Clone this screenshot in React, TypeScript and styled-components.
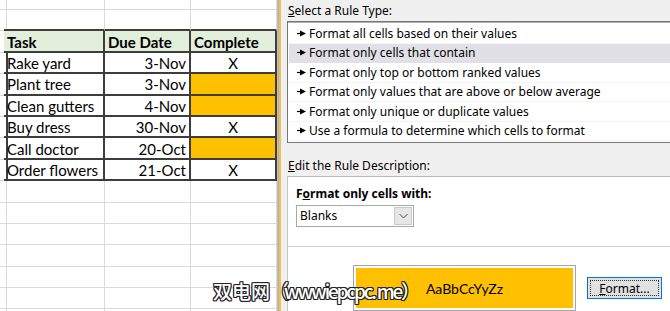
import React from 'react';
import styled, { createGlobalStyle } from 'styled-components';

const Global = createGlobalStyle`
  html, body { margin: 0; padding: 0; background: #fff; overflow: hidden; }
  #root { width: 670px; height: 311px; }
`;

const UI_FONT = `"Noto Sans", "Open Sans", sans-serif`;
const CELL_FONT = `Lato, "Liberation Sans", sans-serif`;
const DARK = '#3d3d3d';
const GRID = '#dadada';

const Page = styled.div`
  position: relative;
  display: flex;
  width: 670px;
  height: 311px;
  overflow: hidden;
  background: #fff;
`;

const Sheet = styled.div`
  flex: none;
  width: 277px;
  display: flex;
  flex-direction: column;
  margin-top: -11.4px;
`;

const Row = styled.div`
  flex: none;
  display: grid;
  grid-template-columns: 4px 101px 86px 86px;
  height: 21.4px;
`;

const Cell = styled.div<{ $r?: boolean; $b?: boolean; $fill?: string; $align?: 'left' | 'right' | 'center'; $bold?: boolean }>`
  box-sizing: border-box;
  min-width: 0;
  border-right: ${(p) => (p.$r ? `2px solid ${DARK}` : `1px solid ${GRID}`)};
  border-bottom: ${(p) => (p.$b ? `2px solid ${DARK}` : `1px solid ${GRID}`)};
  background: ${(p) => p.$fill || 'transparent'};
  display: flex;
  align-items: center;
  justify-content: ${(p) => (p.$align === 'right' ? 'flex-end' : p.$align === 'center' ? 'center' : 'flex-start')};
  padding: 1px 3px 0 3px;
  font-family: ${CELL_FONT};
  font-size: 15px;
  font-weight: ${(p) => (p.$bold ? 700 : 400)};
  color: #000;
  white-space: nowrap;
  overflow: hidden;
`;

const Shade = styled.div`
  flex: none;
  width: 2px;
  background: linear-gradient(to right, #c9c9c9, #a9a9a9);
`;

const Dialog = styled.div`
  flex: none;
  width: 420px;
  box-sizing: border-box;
  background: #f0f0f0;
  border-left: 2px solid #f0c048;
  padding: 3px 0 0 6px;
  display: flex;
  flex-direction: column;
  font-family: ${UI_FONT};
  font-size: 12px;
  color: #000;
`;

const Label = styled.div<{ $top?: number }>`
  height: 15px;
  line-height: 15px;
  padding-left: 1px;
  margin-top: ${(p) => p.$top ?? 0}px;
  white-space: nowrap;
`;

const RuleList = styled.div`
  margin-top: 3px;
  background: #fff;
  border: 1px solid #777;
  box-shadow: inset 0 1px 0 #b0b0b0;
  padding: 2px 0 1px 1px;
  display: flex;
  flex-direction: column;
`;

const RuleItem = styled.div<{ $selected?: boolean }>`
  height: 19.5px;
  box-sizing: border-box;
  display: flex;
  align-items: center;
  gap: 3px;
  padding-left: 8px;
  background: ${(p) => (p.$selected ? '#e0e0e6' : '#fff')};
  border-bottom: 1px solid ${(p) => (p.$selected ? '#e0e0e6' : '#f4f4f4')};
  white-space: nowrap;
`;

const DescBox = styled.div`
  margin-top: 3.5px;
  background: #fff;
  border-top: 1px solid #b8b8b8;
  border-left: 1px solid #c8c8c8;
  display: flex;
  flex-direction: column;
  height: 200px;
`;

const DescTop = styled.div`
  padding: 8.5px 0 0 8px;
  display: flex;
  flex-direction: column;
  align-items: flex-start;
`;

const BoldLabel = styled.div`
  height: 15px;
  line-height: 15px;
  font-weight: 700;
  white-space: nowrap;
`;

const Select = styled.div`
  margin-top: 4.5px;
  width: 118px;
  height: 22px;
  box-sizing: border-box;
  border: 1px solid #a9a9a9;
  background: #fff;
  display: flex;
  align-items: stretch;
  justify-content: space-between;
  padding: 1px;
`;

const SelectText = styled.span`
  padding-left: 2px;
  line-height: 18px;
`;

const SelectArrow = styled.span`
  width: 18px;
  box-sizing: border-box;
  background: #e6e6e6;
  border: 1px solid #c9c9c9;
  display: flex;
  align-items: center;
  justify-content: center;
`;

const Separator = styled.div`
  margin-top: 19px;
  height: 1px;
  background: #d2d2d2;
`;

const DescBottom = styled.div`
  padding: 18px 0 0 65px;
  display: flex;
  align-items: center;
  gap: 11px;
`;

const Preview = styled.div`
  width: 223px;
  height: 46px;
  box-sizing: border-box;
  border: 1px solid #a5a5a5;
  padding: 2px;
  background: #fff;
  display: flex;
`;

const PreviewFill = styled.div`
  flex: 1;
  background: #ffc000;
  display: flex;
  align-items: center;
  justify-content: center;
  font-family: ${CELL_FONT};
  font-size: 14px;
  color: #000;
`;

const FormatButton = styled.div`
  position: relative;
  width: 75px;
  height: 22px;
  box-sizing: border-box;
  border: 1px solid #0078d7;
  background: #e1e1e1;
  display: flex;
  align-items: center;
  justify-content: center;
  &::after {
    content: '';
    position: absolute;
    inset: 2px;
    border: 1px dotted #333;
  }
`;

const Watermark = styled.div`
  position: absolute;
  left: 213px;
  top: 277px;
  font-family: "Noto Sans CJK SC", sans-serif;
  font-size: 19px;
  font-weight: 500;
  color: #fff;
  white-space: nowrap;
  text-shadow: 1px 1px 0 #222, -1px -1px 0 #222, 1px -1px 0 #222, -1px 1px 0 #222, 0 1px 0 #222, 1px 0 0 #222, 0 -1px 0 #222, -1px 0 0 #222;
`;

const WatermarkParen = styled.span`
  display: inline-block;
  width: 14px;
  overflow: visible;
`;

const WatermarkLatin = styled.span`
  letter-spacing: -2.2px;
`;

const Pointer = () => (
  <svg width="9" height="7" viewBox="0 0 9 7">
    <path d="M0 3.5H4" stroke="#000" strokeWidth="1.2" />
    <path d="M3 0.5L9 3.5L3 6.5Z" fill="#000" />
  </svg>
);

const Chevron = () => (
  <svg width="9" height="6" viewBox="0 0 9 6">
    <path d="M0.5 1L4.5 5L8.5 1" stroke="#555" strokeWidth="1" fill="none" />
  </svg>
);

type Task = [string, string, boolean];
const tasks: Task[] = [
  ['Rake yard', '3-Nov', true],
  ['Plant tree', '3-Nov', false],
  ['Clean gutters', '4-Nov', false],
  ['Buy dress', '30-Nov', true],
  ['Call doctor', '20-Oct', false],
  ['Order flowers', '21-Oct', true],
];

const rules = [
  'Format all cells based on their values',
  'Format only cells that contain',
  'Format only top or bottom ranked values',
  'Format only values that are above or below average',
  'Format only unique or duplicate values',
  'Use a formula to determine which cells to format',
];

const EmptyRow = ({ topOfTable }: { topOfTable?: boolean }) => (
  <Row>
    <Cell />
    <Cell $b={topOfTable} />
    <Cell $b={topOfTable} />
    <Cell $b={topOfTable} />
  </Row>
);

export default function App() {
  return (
    <Page>
      <Global />
      <Sheet>
        <EmptyRow />
        <EmptyRow topOfTable />
        <Row>
          <Cell $r />
          <Cell $r $b $bold $fill="#e2efda">Task</Cell>
          <Cell $r $b $bold $fill="#e2efda">Due Date</Cell>
          <Cell $r $b $bold $fill="#e2efda">Complete</Cell>
        </Row>
        {tasks.map(([task, due, done]) => (
          <Row key={task}>
            <Cell $r />
            <Cell $r $b>{task}</Cell>
            <Cell $r $b $align="right">{due}</Cell>
            <Cell $r $b $align="center" $fill={done ? undefined : '#ffc000'}>{done ? 'X' : ''}</Cell>
          </Row>
        ))}
        {Array.from({ length: 8 }, (_, i) => (
          <EmptyRow key={i} />
        ))}
      </Sheet>
      <Shade />
      <Dialog>
        <Label>
          <u>S</u>elect a Rule Type:
        </Label>
        <RuleList>
          {rules.map((r, i) => (
            <RuleItem key={r} $selected={i === 1}>
              <Pointer />
              {r}
            </RuleItem>
          ))}
        </RuleList>
        <Label $top={14.5}>
          <u>E</u>dit the Rule Description:
        </Label>
        <DescBox>
          <DescTop>
            <BoldLabel>
              F<u>o</u>rmat only cells with:
            </BoldLabel>
            <Select>
              <SelectText>Blanks</SelectText>
              <SelectArrow>
                <Chevron />
              </SelectArrow>
            </Select>
          </DescTop>
          <Separator />
          <DescBottom>
            <Preview>
              <PreviewFill>AaBbCcYyZz</PreviewFill>
            </Preview>
            <FormatButton>
              <span>
                <u>F</u>ormat...
              </span>
            </FormatButton>
          </DescBottom>
        </DescBox>
      </Dialog>
      <Watermark>
        双电网<WatermarkParen>（</WatermarkParen>
        <WatermarkLatin>wwwiepcpc. me</WatermarkLatin>
        <WatermarkParen>）</WatermarkParen>
      </Watermark>
    </Page>
  );
}
